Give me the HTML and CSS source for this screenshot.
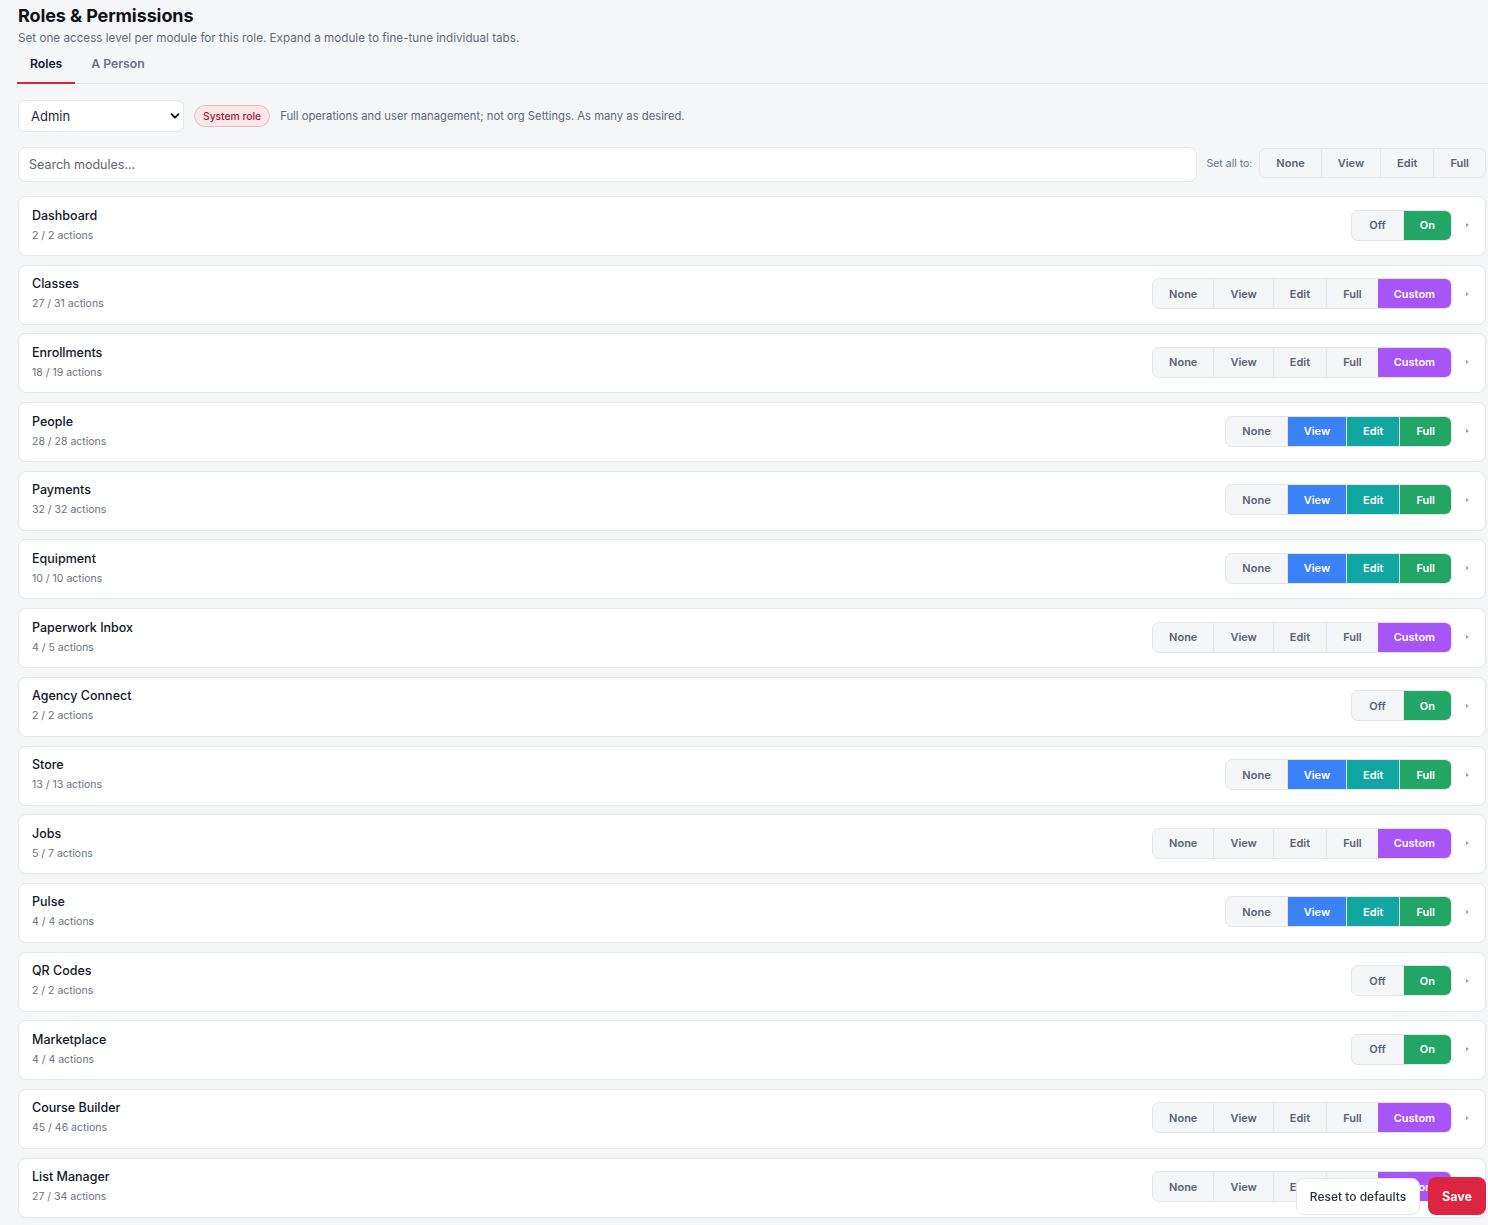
FILE: index.html
```html
<!DOCTYPE html>
<html lang="en">
<head>
<meta charset="utf-8">
<title>Roles &amp; Permissions</title>
<link rel="stylesheet" href="styles.css">
</head>
<body>
<div class="page">
  <h1 class="title">Roles &amp; Permissions</h1>
  <p class="subtitle">Set one access level per module for this role. Expand a module to fine-tune individual tabs.</p>
  <nav class="tabs">
    <span class="tab active">Roles</span>
    <span class="tab">A Person</span>
  </nav>

  <div class="role-row">
    <select class="role-select"><option>Admin</option></select>
    <span class="badge">System role</span>
    <span class="role-desc">Full operations and user management; not org Settings. As many as desired.</span>
  </div>

  <div class="search-row">
    <input class="search" type="text" placeholder="Search modules...">
    <span class="setall-label">Set all to:</span>
    <div class="seg seg-plain">
      <button class="btn">None</button><button class="btn">View</button><button class="btn">Edit</button><button class="btn">Full</button>
    </div>
  </div>

  <div class="modules">
    <div class="card"><div class="info"><div class="name">Dashboard</div><div class="count">2 / 2 actions</div></div><div class="ctrl"><div class="seg"><button class="btn w-off">Off</button><button class="btn on">On</button></div><span class="caret"></span></div></div>

    <div class="card"><div class="info"><div class="name">Classes</div><div class="count">27 / 31 actions</div></div><div class="ctrl"><div class="seg"><button class="btn">None</button><button class="btn">View</button><button class="btn">Edit</button><button class="btn">Full</button><button class="btn custom">Custom</button></div><span class="caret"></span></div></div>

    <div class="card"><div class="info"><div class="name">Enrollments</div><div class="count">18 / 19 actions</div></div><div class="ctrl"><div class="seg"><button class="btn">None</button><button class="btn">View</button><button class="btn">Edit</button><button class="btn">Full</button><button class="btn custom">Custom</button></div><span class="caret"></span></div></div>

    <div class="card"><div class="info"><div class="name">People</div><div class="count">28 / 28 actions</div></div><div class="ctrl"><div class="seg"><button class="btn">None</button><button class="btn view">View</button><button class="btn edit">Edit</button><button class="btn full">Full</button></div><span class="caret"></span></div></div>

    <div class="card"><div class="info"><div class="name">Payments</div><div class="count">32 / 32 actions</div></div><div class="ctrl"><div class="seg"><button class="btn">None</button><button class="btn view">View</button><button class="btn edit">Edit</button><button class="btn full">Full</button></div><span class="caret"></span></div></div>

    <div class="card"><div class="info"><div class="name">Equipment</div><div class="count">10 / 10 actions</div></div><div class="ctrl"><div class="seg"><button class="btn">None</button><button class="btn view">View</button><button class="btn edit">Edit</button><button class="btn full">Full</button></div><span class="caret"></span></div></div>

    <div class="card"><div class="info"><div class="name">Paperwork Inbox</div><div class="count">4 / 5 actions</div></div><div class="ctrl"><div class="seg"><button class="btn">None</button><button class="btn">View</button><button class="btn">Edit</button><button class="btn">Full</button><button class="btn custom">Custom</button></div><span class="caret"></span></div></div>

    <div class="card"><div class="info"><div class="name">Agency Connect</div><div class="count">2 / 2 actions</div></div><div class="ctrl"><div class="seg"><button class="btn w-off">Off</button><button class="btn on">On</button></div><span class="caret"></span></div></div>

    <div class="card"><div class="info"><div class="name">Store</div><div class="count">13 / 13 actions</div></div><div class="ctrl"><div class="seg"><button class="btn">None</button><button class="btn view">View</button><button class="btn edit">Edit</button><button class="btn full">Full</button></div><span class="caret"></span></div></div>

    <div class="card"><div class="info"><div class="name">Jobs</div><div class="count">5 / 7 actions</div></div><div class="ctrl"><div class="seg"><button class="btn">None</button><button class="btn">View</button><button class="btn">Edit</button><button class="btn">Full</button><button class="btn custom">Custom</button></div><span class="caret"></span></div></div>

    <div class="card"><div class="info"><div class="name">Pulse</div><div class="count">4 / 4 actions</div></div><div class="ctrl"><div class="seg"><button class="btn">None</button><button class="btn view">View</button><button class="btn edit">Edit</button><button class="btn full">Full</button></div><span class="caret"></span></div></div>

    <div class="card"><div class="info"><div class="name">QR Codes</div><div class="count">2 / 2 actions</div></div><div class="ctrl"><div class="seg"><button class="btn w-off">Off</button><button class="btn on">On</button></div><span class="caret"></span></div></div>

    <div class="card"><div class="info"><div class="name">Marketplace</div><div class="count">4 / 4 actions</div></div><div class="ctrl"><div class="seg"><button class="btn w-off">Off</button><button class="btn on">On</button></div><span class="caret"></span></div></div>

    <div class="card"><div class="info"><div class="name">Course Builder</div><div class="count">45 / 46 actions</div></div><div class="ctrl"><div class="seg"><button class="btn">None</button><button class="btn">View</button><button class="btn">Edit</button><button class="btn">Full</button><button class="btn custom">Custom</button></div><span class="caret"></span></div></div>

    <div class="card"><div class="info"><div class="name">List Manager</div><div class="count">27 / 34 actions</div></div><div class="ctrl"><div class="seg"><button class="btn">None</button><button class="btn">View</button><button class="btn">Edit</button><button class="btn">Full</button><button class="btn custom">Custom</button></div><span class="caret"></span></div></div>
  </div>
</div>

<div class="actions">
  <button class="reset">Reset to defaults</button>
  <button class="save">Save</button>
</div>
</body>
</html>
```

FILE: styles.css
```css
* { box-sizing: border-box; }
html, body {
  margin: 0;
  padding: 0;
  background: #f5f6f8;
  font-family: Inter, "Noto Sans", "Liberation Sans", sans-serif;
  color: #111827;
}
.page {
  padding: 4px 2px 40px 17px;
}
.title {
  margin: 0 0 0 1px;
  font-size: 18px;
  line-height: 24px;
  font-weight: 700;
  color: #0f1115;
  letter-spacing: -0.1px;
}
.subtitle {
  margin: 2px 0 0 1px;
  font-size: 11.7px;
  line-height: 16px;
  color: #636a76;
}
.tabs {
  display: flex;
  gap: 3px;
  margin: 6px -2px 0 0;
  border-bottom: 1px solid #e2e4e8;
}
.tab {
  padding: 4px 13px 10px;
  font-size: 12.2px;
  line-height: 16px;
  font-weight: 600;
  color: #6b7280;
  border-bottom: 2px solid transparent;
  margin-bottom: -1px;
}
.tab.active {
  color: #111827;
  border-bottom-color: #dc2641;
}
.role-row {
  display: flex;
  align-items: center;
  margin-top: 16px;
  padding-left: 1px;
}
.role-select {
  width: 166px;
  height: 32px;
  border: 1px solid #e5e7eb;
  border-radius: 7px;
  background: #fff url("data:image/svg+xml;utf8,<svg xmlns='http://www.w3.org/2000/svg' width='10' height='10' viewBox='0 0 10 10'><path d='M1.5 3.2 L5 6.7 L8.5 3.2' fill='none' stroke='%23111' stroke-width='1.8' stroke-linecap='round' stroke-linejoin='round'/></svg>") no-repeat right 3px center;
  -webkit-appearance: none;
  appearance: none;
  font-family: inherit;
  font-size: 13px;
  color: #1f2937;
  padding: 0 12px;
}
.badge {
  margin-left: 10px;
  height: 22px;
  padding: 0 8px;
  display: inline-flex;
  align-items: center;
  border-radius: 11px;
  background: #fbe7ea;
  border: 1px solid #f1b9c2;
  color: #9b1c33;
  font-size: 10.3px;
  font-weight: 500;
}
.role-desc {
  margin-left: 10px;
  font-size: 11.25px;
  color: #5f6673;
}
.search-row {
  display: flex;
  align-items: center;
  margin-top: 15px;
  padding-left: 1px;
}
.search {
  flex: 1;
  height: 35px;
  border: 1px solid #e5e7eb;
  border-radius: 8px;
  background: #fff;
  font-family: inherit;
  font-size: 12.5px;
  padding: 0 10px;
  color: #111;
}
.search::placeholder { color: #5f6673; }
.setall-label {
  margin-left: 10px;
  margin-right: 7px;
  margin-top: -2px;
  font-size: 10.5px;
  color: #6b7280;
}
.modules {
  display: flex;
  flex-direction: column;
  gap: 8.7px;
  margin-top: 14px;
  padding-left: 1px;
}
.card {
  height: 60px;
  background: #fff;
  border: 1px solid #e5e7eb;
  border-radius: 8px;
  display: flex;
  align-items: center;
  justify-content: space-between;
  padding: 0 16px 0 13px;
}
.info { display: flex; flex-direction: column; margin-top: -2px; }
.name {
  font-size: 12.5px;
  line-height: 18px;
  font-weight: 500;
  color: #111827;
}
.count {
  margin-top: 3px;
  font-size: 10.5px;
  line-height: 16px;
  color: #6b7280;
}
.ctrl {
  display: flex;
  align-items: center;
  gap: 14px;
  margin-top: -2px;
}
.caret {
  width: 0;
  height: 0;
  border-top: 2.5px solid transparent;
  border-bottom: 2.5px solid transparent;
  border-left: 3.5px solid #9ca3af;
}
.seg {
  display: flex;
  height: 31px;
  border: 1px solid #e3e5e9;
  border-radius: 7px;
  overflow: hidden;
  background: #f5f6f8;
}
.seg-plain { height: 30px; margin-top: -3px; }
.btn {
  border: 0;
  border-left: 1px solid #e3e5e9;
  background: #f5f6f8;
  font-family: inherit;
  font-size: 11px;
  font-weight: 600;
  color: #5b6270;
  padding: 0 16px;
  margin: 0;
  cursor: pointer;
}
.btn:first-child { border-left: 0; }
.btn.w-off { padding: 0 17px; }
.btn.on { background: #23a566; color: #fff; padding: 0 16px; }
.btn.view { background: #3b82f6; color: #fff; }
.btn.edit { background: #11a6a2; color: #fff; border-left-color: #d8f1f0; }
.btn.full { background: #23a566; color: #fff; border-left-color: #d8f1f0; }
.btn.custom { background: #a855f7; color: #fff; border-left: 0; }
.actions {
  position: fixed;
  right: 2px;
  bottom: 10px;
  display: flex;
  gap: 8px;
  align-items: center;
}
.reset {
  height: 37px;
  width: 124px;
  border: 1px solid #e5e7eb;
  border-radius: 8px;
  background: #fff;
  font-family: inherit;
  font-size: 12px;
  font-weight: 500;
  color: #2d3340;
}
.save {
  height: 38px;
  width: 58px;
  border: 0;
  border-radius: 8px;
  background: #dc2641;
  font-family: inherit;
  font-size: 12.5px;
  font-weight: 700;
  color: #fff;
}
```
